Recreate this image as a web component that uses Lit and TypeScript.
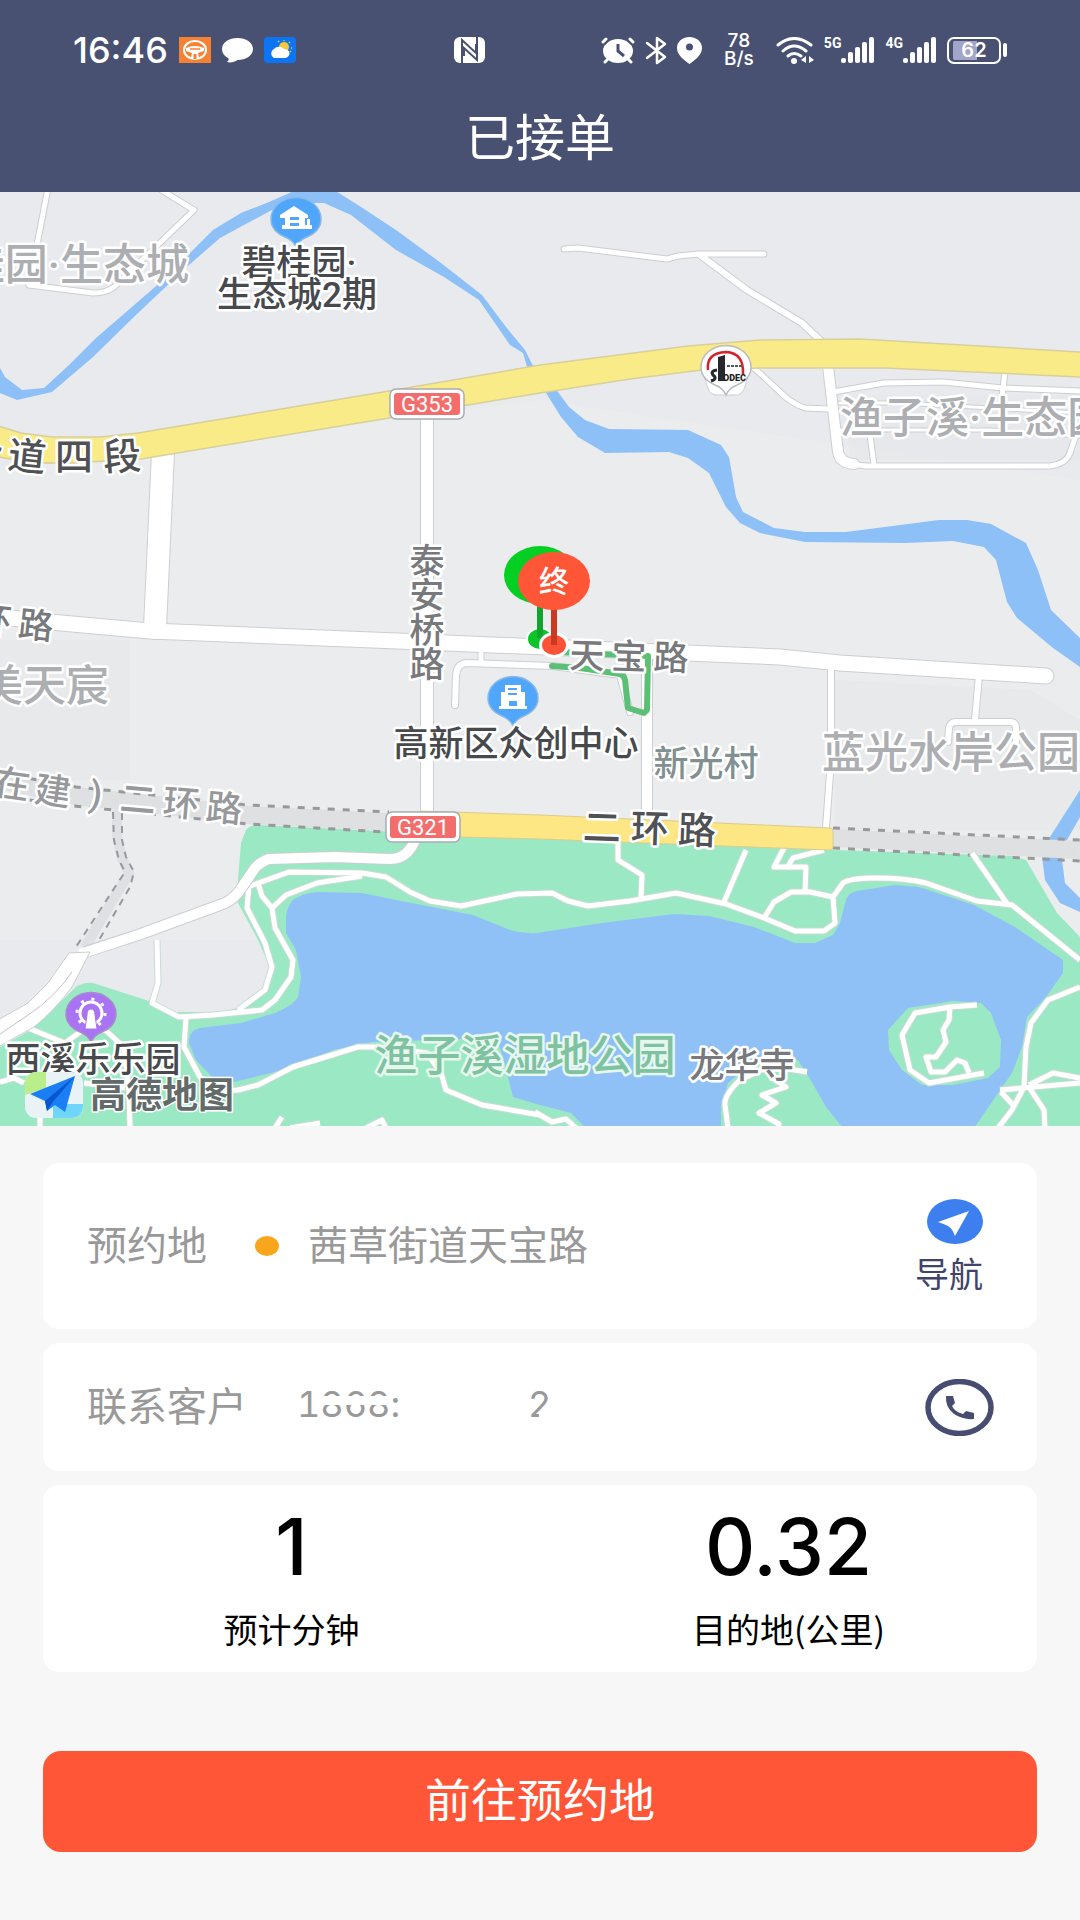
import { LitElement, html, svg, css } from "lit";
import { customElement } from "lit/decorators.js";

type Road = { d: string; w: number };
type Label = { t: string; x: number; y: number; c: string; a?: string };
type Glyph = { t: string; x: number; y: number; r: number; c: string };

const CITY_ROADS: Road[] = [
  { d: "M48 188L36 250L29 285L93 293Q106 293 114 287L194 210L158 188", w: 5 },
  { d: "M564 249L578 248L667 259L678 256L698 254H764", w: 5 },
  { d: "M700 255L747 290L802 323L822 342", w: 6 },
  { d: "M754 368L778 390Q790 403 805 408L828 409", w: 5 },
  { d: "M833 392L884 383L943 382L1003 388L1080 391", w: 5 },
  { d: "M1005 372L1001 405", w: 5 },
  { d: "M840 403H900L1080 413M840 430H990L1080 436", w: 3 },
  { d: "M870 435L874 465", w: 5 },
  { d: "M850 464L866 466H1050Q1066 464 1070 453L1077 432", w: 5 },
  { d: "M828 366L838 452Q840 463 854 464", w: 10 },
  { d: "M163 452L155 628", w: 22 },
  { d: "M427 415V818", w: 12 },
  { d: "M455 705L456 675Q457 663 468 663L553 666L620 675L630 712", w: 6 },
  { d: "M481 648V662", w: 5 },
  { d: "M647 650V820", w: 10 },
  { d: "M831 664V760L826 828", w: 6 },
  { d: "M979 675L975 720M948 742L949 728Q950 722 956 722H1010Q1016 722 1016 728V742", w: 6 },
  { d: "M0 617L50 622L150 631L447 643L780 657L840 663L1046 676", w: 15 },
];

const PARK_PATHS = [
  "M250 886L289 872L362 873L386 877L410 892L430 901L461 906L517 894L552 893L568 901L588 906L630 901L676 893L726 904L764 918L795 931H824L835 923L833 897L843 883Q850 878 877 878Q905 878 926 883L977 901L1012 905L1080 960",
  "M764 918L774 902L791 892H810L833 897M805 892L806 867H774L784 848M788 866L793 858L824 850",
  "M618 843V860L642 875L641 898M746 850L724 902M972 853L1008 905",
  "M362 876L317 883L286 895L272 908L262 896L258 883M272 908L275 928L293 960L291 977L275 1000L262 1010L213 1015L179 1017L152 1003L158 983L157 940",
  "M249 885L247 908L265 943L272 967L265 990L238 1010",
  "M186 1018L184 1047L200 1077Q215 1092 238 1090L258 1085L293 1067L358 1047H379L427 1053L441 1073L446 1090L482 1105L540 1115",
  "M28 1028L65 1043L83 1030H105L124 1047L129 1093L130 1128M0 1082L14 1078L24 1083M84 1083L125 1088M40 1115V1128",
  "M807 1072L770 1066L740 1080Q724 1095 725 1105L728 1128M771 1077L786 1087L762 1095L776 1103L759 1113L779 1124L778 1128",
  "M977 1005L950 1007L915 1013L902 1035L910 1070L929 1083L984 1073M950 1008L949 1020L943 1030L946 1042L936 1057H926L931 1072H945L957 1060L965 1063L969 1073",
  "M1080 987L1048 1000L1031 1023L1026 1047L1024 1087L1012 1110L998 1128M1000 1090L1080 1083M1029 1085L1053 1073L1080 1078M1001 1092L1015 1107M1029 1087L1044 1110L1045 1128",
  "M275 1128L282 1117M290 1128L320 1123M366 1128L382 1120L386 1128M535 1112L552 1122L566 1119L576 1128",
];

const LABELS: Label[] = [
  { t: "桂园·生态城", x: 189, y: 280, c: "area", a: "end" },
  { t: "碧桂园·", x: 299, y: 275, c: "poi", a: "middle" },
  { t: "生态城2期", x: 297, y: 307, c: "poi", a: "middle" },
  { t: "渔子溪·生态园", x: 840, y: 433, c: "area", a: "start" },
  { t: "美天宸", x: 109, y: 701, c: "area", a: "end" },
  { t: "蓝光水岸公园", x: 822, y: 768, c: "area", a: "start" },
  { t: "高新区众创中心", x: 516, y: 756, c: "poi", a: "middle" },
  { t: "新光村", x: 706, y: 776, c: "village", a: "middle" },
  { t: "渔子溪湿地公园", x: 525, y: 1071, c: "park", a: "middle" },
  { t: "龙华寺", x: 742, y: 1078, c: "street", a: "middle" },
  { t: "西溪乐乐园", x: 93, y: 1072, c: "poi", a: "middle" },
];

/* Road names follow the road, so every character has its own anchor and angle. */
const GLYPHS: Glyph[] = [
  { t: "大", x: -17, y: 452, r: 14, c: "major" },
  { t: "道", x: 27, y: 457, r: 6, c: "major" },
  { t: "四", x: 74, y: 457, r: 0, c: "major" },
  { t: "段", x: 122, y: 457, r: -4, c: "major" },
  { t: "环", x: -6, y: 620, r: 6, c: "street" },
  { t: "路", x: 36, y: 625, r: 6, c: "street" },
  { t: "泰", x: 427, y: 561, r: 0, c: "street" },
  { t: "安", x: 427, y: 595, r: 0, c: "street" },
  { t: "桥", x: 427, y: 630, r: 0, c: "street" },
  { t: "路", x: 427, y: 664, r: 0, c: "street" },
  { t: "天", x: 587, y: 655, r: 2, c: "street" },
  { t: "宝", x: 629, y: 656, r: 2, c: "street" },
  { t: "路", x: 671, y: 657, r: 2, c: "street" },
  { t: "在", x: 12, y: 784, r: 8, c: "planned" },
  { t: "建", x: 53, y: 791, r: 8, c: "planned" },
  { t: ")", x: 96, y: 794, r: 8, c: "planned" },
  { t: "二", x: 138, y: 799, r: 5, c: "planned" },
  { t: "环", x: 181, y: 803, r: 5, c: "planned" },
  { t: "路", x: 224, y: 808, r: 5, c: "planned" },
  { t: "二", x: 602, y: 828, r: 2, c: "major" },
  { t: "环", x: 650, y: 829, r: 2, c: "major" },
  { t: "路", x: 697, y: 831, r: 2, c: "major" },
];

const bubble = (x: number, y: number, fill: string, edge: string) => svg`
  <path d="M${x - 25} ${y}a25 21.500 0 1 1 50 0q0 12 -14 18q-8 3 -11 10q-3 -7 -11 -10q-14 -6 -14 -18z" fill=${fill} stroke=${edge} stroke-width="1.500"/>`;

const shield = (x: number, y: number, t: string) => svg`
  <rect x=${x} y=${y} width="74" height="30" rx="6" fill="#fff" stroke="#a9aab5" stroke-width="1.500"/>
  <rect x=${x + 4} y=${y + 4} width="66" height="22" rx="3" fill="#f36d6d"/>
  <text class="shield" x=${x + 37} y=${y + 23} text-anchor="middle">${t}</text>`;

@customElement("route-map")
export class RouteMap extends LitElement {
  static styles = css`
    :host { display: block; }
    .map { display: block; width: 100%; height: auto; background: #e9eaed; }
    text { font-family: Roboto, "Noto Sans CJK SC", sans-serif; font-weight: 500; paint-order: stroke; stroke: #fff; stroke-width: 5px; stroke-linejoin: round; }
    .area { font-size: 43px; fill: #acaeb2; }
    .park { font-size: 43px; fill: #7fc2a1; stroke: #e6f8ee; }
    .poi { font-size: 35px; fill: #47494d; }
    .village { font-size: 35px; fill: #819090; }
    .street { font-size: 35px; fill: #77797c; }
    .planned { font-size: 36px; fill: #96989b; }
    .major { font-size: 38px; fill: #4f5154; }
    .brand { font-size: 36px; fill: #626b69; stroke-width: 3px; font-weight: 700; }
    .shield { font-family: Roboto, sans-serif; font-size: 22px; font-weight: 400; fill: #fff; stroke: none; }
    .pin { font-size: 30px; fill: #fff; stroke: none; }
    .sign { font-family: Roboto, sans-serif; font-size: 9px; font-weight: 900; fill: #222; stroke: none; }
  `;

  render() {
    return html`
      <svg class="map" viewBox="0 192 1080 934" role="img" aria-label="高德地图">
        <path fill="#eceded" d="M0 470L540 400L1080 480V940H0z" opacity=".6"/>
        <path fill="#e4e6ea" d="M0 640H130V780H0zM835 680L1030 690L1080 720V830H835zM845 395H1080V460H850z" opacity=".5"/>

        <g fill="#8dc0f7">
          <path d="M0 368L5 377L22 390L44 388L69 365L96 338L155 287L188 255L213 230L241 213L269 202L296 190H334L358 205L396 230L441 263L482 295L506 327L525 350L534 368L528 370L523 353L510 345L479 300L444 277L396 250L351 215L324 203H296L272 210L220 238L189 265L138 313L93 357L52 392L17 400L0 393z"/>
          <path d="M555 388L569 407L585 420L609 429L688 430L721 445L729 457L736 497L743 512L774 528L805 532H846L939 520H967L991 524L1026 543L1038 570L1051 610L1080 638V667L1053 648L1017 618L1007 602L996 560L984 547L953 541L905 543L805 542L760 533L740 523L726 507L709 473L688 458L669 452L605 453L578 437L561 417L543 388z"/>
          <path d="M1080 790L1048 840L1042 857L1045 880L1060 903L1080 912V898L1065 883L1062 860L1067 840L1080 817z"/>
        </g>

        <path fill="#9be8c4" d="M241 843L246 830Q250 825 258 825L458 835L833 850L1013 856L1026 860L1057 913L1080 937V1128H0V1047L31 1030L76 987Q84 982 93 983L152 1002L176 1012H224Q246 1008 265 987Q272 977 270 967L258 940L238 903V880z"/>
        <path fill="#8fc1f7" d="M286 917Q287 906 293 900Q303 893 317 892L362 893L396 900L473 915L510 930Q523 934 537 933L602 923L674 914L709 916L754 927L795 943H815L833 935L840 923L846 900Q848 893 857 891L895 885L919 887L974 905L1015 927L1063 960V973L1046 997L1027 1017L1022 1047L1012 1073L974 1128H843L826 1107L809 1077L798 1060L780 1055L740 1073L728 1083L721 1107V1128H586L571 1113L540 1105L513 1097L503 1057L496 1038L372 1042L334 1050L275 1072L234 1082L213 1078L196 1060L189 1043Q189 1030 200 1028L241 1023L275 1013Q294 1005 298 997L301 977L296 950L286 933z"/>
        <path fill="#9be8c4" d="M888 1030L908 1008L953 1001L981 1003L991 1013L1001 1040L1000 1067L988 1078L953 1085H922L902 1070L889 1050z"/>

        <path fill="none" stroke="#dfe0e1" stroke-width="18" d="M0 780L75 796L248 815L388 822M833 838L1080 850"/>
        <path fill="none" stroke="#dfe0e3" stroke-width="10" d="M117 810V838L122 858L129 873L85 947"/>
        <g fill="none" stroke="#97999d" stroke-width="3" stroke-dasharray="7 8">
          <path d="M0 773L76 787L248 805L389 812M0 796L74 806L248 824L386 832"/>
          <path d="M833 828L1080 840M833 848L1080 861"/>
        </g>
        <g fill="none" stroke="#97999d" stroke-width="2" stroke-dasharray="7 6">
          <path d="M113 812L114 840L119 860L125 872L115 887L76 947M122 813V840L126 857L134 872L130 887L95 947"/>
        </g>

        <g fill="none" stroke-linejoin="round" stroke-linecap="round">
          ${CITY_ROADS.map((r) => svg`<path d=${r.d} stroke="#cdced3" stroke-width=${r.w + 2}/>`)}
          ${CITY_ROADS.map((r) => svg`<path d=${r.d} stroke="#fff" stroke-width=${r.w}/>`)}
        </g>

        <g fill="none" stroke-linejoin="round" stroke-linecap="butt">
          ${PARK_PATHS.map((d) => svg`<path d=${d} stroke="#c9dcd3" stroke-width="7"/>`)}
          ${PARK_PATHS.map((d) => svg`<path d=${d} stroke="#fff" stroke-width="5"/>`)}
          <path stroke="#cdced3" stroke-width="12" d="M416 838Q408 859 390 859L334 857L269 859Q260 862 255 868L238 893Q230 902 220 905L179 920L138 935L85 952"/>
          <path stroke="#fff" stroke-width="10" d="M416 838Q408 859 390 859L334 857L269 859Q260 862 255 868L238 893Q230 902 220 905L179 920L138 935L80 954"/>
        </g>
        <path fill="#fff" stroke="#cdced3" d="M69 953L90 952L72 987Q55 1010 34 1027L-2 1047V1020L28 1003L48 983z"/>
        <path fill="none" stroke="#c3c4ca" d="M72 972Q54 998 28 1015L0 1034"/>

        <path fill="#f9eb88" stroke="#d8cf9c" stroke-width="1.500" d="M-2 426L21 433L52 437H100L138 433L389 391L540 365L688 346L760 340L860 339L1082 352V377L884 368H760L702 370L630 379L540 393L389 418L141 459L69 463H34L-2 457z"/>
        <path fill="#fce784" stroke="#dccb8d" d="M420 811L540 815L830 828Q833 828 833 831V847Q833 850 830 850L540 839L420 836z"/>

        <g fill="none" stroke="#5bbf75" stroke-width="6" stroke-linejoin="round" stroke-linecap="round">
          <path d="M552 666L580 668L620 674Q624 675 625 680L628 708L644 713L647 710L648 656L600 654L560 652"/>
        </g>

        ${shield(390, 389, "G353")}
        ${shield(386, 812, "G321")}

        ${bubble(296, 219, "#4fa6fa", "#8ab9e6")}
        <path fill="#fff" d="M280 215L294 206L308 215V218H305V225H307V219H310V225H312V229H282V225H285V218H280z"/>
        <path fill="#4fa6fa" d="M290 217H299V220H290zM290 223H299V226H290z"/>
        ${bubble(513, 698, "#4fa6fa", "#8ab9e6")}
        <path fill="#fff" d="M505 685H521V692H525V706H527V709H499V706H501V692H505z"/>
        <path fill="#4fa6fa" d="M508 688H517V690H508zM508 693H517V695H508zM509 701H517V706H509z"/>
        ${bubble(91, 1014, "#a974f3", "#a98cc9")}
        <circle cx="91" cy="1013" r="11" fill="none" stroke="#fff" stroke-width="3"/>
        <circle cx="91" cy="1013" r="14" fill="none" stroke="#fff" stroke-width="3" stroke-dasharray="3 8"/>
        <path fill="#fff" stroke="#a974f3" d="M91 1009Q95 1009 95 1015L97 1029H85L87 1015Q87 1009 91 1009z"/>
        <path fill="#fff" d="M705 378Q708 395 716 395H738Q745 393 747 378z" stroke="#cfcfd4"/>
        ${bubble(726, 367, "#fff", "#b9bac2")}
        <path fill="none" stroke="#d3222c" stroke-width="2.500" d="M708 370Q706 353 726 352Q744 353 743 374"/>
        <path fill="#26282b" d="M718 357L725 355V381H718z"/>
        <path fill="none" stroke="#26282b" stroke-width="3" d="M717 370Q710 371 713 375Q718 379 711 381"/>
        <path stroke="#55575b" stroke-width="2" stroke-dasharray="3 1" d="M727 366H742"/>
        <text class="sign" x="723" y="381">ODEC</text>

        ${LABELS.map((l) => svg`<text class=${l.c} x=${l.x} y=${l.y} text-anchor=${l.a ?? "start"}>${l.t}</text>`)}
        ${GLYPHS.map((g) => svg`<text class=${g.c} transform=${`translate(${g.x} ${g.y}) rotate(${g.r})`} y="13" text-anchor="middle">${g.t}</text>`)}

        <g>
          <ellipse cx="540" cy="639" rx="14" ry="12" fill="#fff"/>
          <ellipse cx="540" cy="639" rx="12" ry="10" fill="#0cc52a"/>
          <rect x="537" y="600" width="6" height="38" fill="#12a52e"/>
          <ellipse cx="540" cy="575" rx="36" ry="29" fill="#06cf23"/>
          <ellipse cx="554" cy="645" rx="15" ry="13" fill="#fff"/>
          <ellipse cx="554" cy="645" rx="12" ry="10" fill="#fb5238"/>
          <rect x="551" y="606" width="6" height="39" fill="#c93a22"/>
          <ellipse cx="554" cy="581" rx="36" ry="29" fill="#ff5638"/>
          <text class="pin" x="554" y="592" text-anchor="middle">终</text>
        </g>

        <rect x="25" y="1072" width="58" height="46" rx="11" fill="#e9f3f5"/>
        <path fill="#b9ee8a" d="M36 1072H46V1088L25 1095V1083Q26 1073 36 1072z"/>
        <path fill="#6fd5fb" d="M53 1104H83V1107Q82 1117 72 1118H53z"/>
        <path fill="#1a7ff5" d="M30 1094L75 1076L65 1112L55 1105L47 1111L45 1101z"/>
        <path fill="#0a55d0" d="M75 1076L45 1101L47 1111L52 1103z"/>
        <text class="brand" x="90" y="1108">高德地图</text>
      </svg>`;
  }
}

@customElement("status-bar")
export class StatusBar extends LitElement {
  static styles = css`
    :host { display: flex; align-items: center; height: 100px; padding: 0 73px; box-sizing: border-box; color: #fff; font-family: Inter, sans-serif; }
    svg { display: block; flex: none; }
    .left, .right { display: flex; align-items: center; gap: 11px; }
    .nfc { margin-left: 158px; }
    .right { margin-left: auto; gap: 10px; }
    .time { font-size: 36px; line-height: 40px; font-weight: 500; }
    .speed { display: flex; flex-direction: column; align-items: center; width: 36px; margin: 0 9px; font-size: 19px; line-height: 18px; font-weight: 500; }
    .cell { display: flex; align-items: flex-start; }
    .gen { font-family: Roboto, sans-serif; font-size: 14px; line-height: 12px; font-weight: 700; }
    .battery { display: flex; align-items: center; gap: 2px; }
    .shell { display: flex; align-items: center; justify-content: center; box-sizing: border-box; width: 54px; height: 27px; border: 2px solid #fff; border-radius: 7px; font-size: 20px; line-height: 22px; font-weight: 600; background: linear-gradient(90deg, #a2a4c8 58%, transparent 58%) content-box; padding: 2px 4px; }
    .cap { width: 4px; height: 14px; border-radius: 2px; background: #fff; }
  `;

  private bars() {
    return html`<svg width="34" height="26" viewBox="0 0 34 26" fill="#fff" aria-hidden="true">
      <rect x="0" y="21" width="5" height="5" rx="2"/><rect x="7" y="15" width="5" height="11" rx="2"/>
      <rect x="14" y="10" width="5" height="16" rx="2"/><rect x="21" y="5" width="5" height="21" rx="2"/>
      <rect x="28" y="0" width="5" height="26" rx="2"/></svg>`;
  }

  render() {
    return html`
      <div class="left">
        <span class="time">16:46</span>
        <svg width="32" height="26" viewBox="0 0 32 26" aria-hidden="true">
          <rect width="32" height="26" fill="#f58233"/>
          <ellipse cx="16" cy="13" rx="11" ry="9" fill="none" stroke="#fff" stroke-width="2"/>
          <path d="M7 11Q16 7 25 11V14L19 16L20 21H12L13 16L7 14z" fill="#fff"/>
          <path d="M11 12H21" stroke="#f58233" stroke-width="1.500"/><path d="M16 17V22" stroke="#f58233" stroke-width="3"/>
        </svg>
        <svg width="31" height="26" viewBox="0 0 31 26" fill="#fff" aria-hidden="true">
          <path d="M15.500 1C24 1 31 5.500 31 12S24 23 15.500 23C13 25 8 26 5 25C7 23 7 22 6 21C2 19 0 16 0 12C0 5.500 7 1 15.500 1z"/>
        </svg>
        <svg width="32" height="26" viewBox="0 0 32 26" aria-hidden="true">
          <rect width="32" height="26" rx="4" fill="#0d74f4"/>
          <circle cx="20" cy="10" r="5" fill="#f9c835"/>
          <path d="M20 4V3M25 6L26 5M27 11H28M15 5L14 4M26 14L27 15" stroke="#f9c835" stroke-width="1.500"/>
          <path d="M10 21a5 5 0 0 1 0-9a6 5 0 0 1 10 0a5 4.500 0 0 1 1 9z" fill="#fff"/>
        </svg>
      </div>
      <svg class="nfc" width="31" height="26" viewBox="0 0 31 26" aria-hidden="true">
        <rect width="31" height="26" rx="6" fill="#fff"/>
        <path d="M8 26V3L22 16V7M23 0V23L10 11V19" fill="none" stroke="#495173" stroke-width="2"/>
      </svg>
      <div class="right">
        <svg width="34" height="27" viewBox="0 0 34 27" aria-hidden="true">
          <ellipse cx="17" cy="14" rx="15" ry="12" fill="#fff"/>
          <path d="M2 6L6 2M32 6L28 2M6 22L4 25M28 22L30 25" stroke="#495173" stroke-width="6"/>
          <path d="M2 5L5 2M32 5L29 2M7 22L4 25M27 22L30 25" stroke="#fff" stroke-width="3" stroke-linecap="round"/>
          <path d="M17 7V14L23 19" fill="none" stroke="#495173" stroke-width="3"/>
        </svg>
        <svg width="22" height="29" viewBox="0 0 22 29" fill="none" stroke="#fff" stroke-width="2.500" stroke-linejoin="round" stroke-linecap="round" aria-hidden="true">
          <path d="M2 7L20 21L12 27V2L20 8L2 22"/>
        </svg>
        <svg width="25" height="27" viewBox="0 0 25 27" aria-hidden="true">
          <path fill="#fff" d="M12.500 0C20 0 25 5 25 11C25 18 18 23 12.500 27C7 23 0 18 0 11C0 5 5 0 12.500 0z"/>
          <circle cx="12.500" cy="10" r="3.500" fill="#495173"/>
        </svg>
        <div class="speed"><span>78</span><span>B/s</span></div>
        <svg width="38" height="27" viewBox="0 0 38 27" fill="none" stroke="#fff" stroke-width="3" stroke-linecap="round" aria-hidden="true">
          <path d="M2 8Q18 -5 35 8M7 14Q18 4 30 14M12 19Q18 14 25 19"/>
          <circle cx="18" cy="24" r="3" fill="#fff" stroke="none"/>
          <path d="M30 19V26L25 23M33 26V19L38 23" fill="#fff" stroke="none"/>
        </svg>
        <div class="cell"><span class="gen">5G</span>${this.bars()}</div>
        <div class="cell"><span class="gen">4G</span>${this.bars()}</div>
        <div class="battery"><span class="shell">62</span><span class="cap"></span></div>
      </div>`;
  }
}

@customElement("app-root")
export class AppRoot extends LitElement {
  static styles = css`
    :host { display: flex; flex-direction: column; min-height: 100vh; background: #f7f7f7; font-family: "Noto Sans CJK SC", sans-serif; }
    .head { background: #495173; padding-bottom: 24px; }
    .title { margin: 0; color: #fff; font-size: 50px; line-height: 68px; font-weight: 400; text-align: center; }
    .body { display: flex; flex-direction: column; gap: 14px; padding: 37px 43px 68px; }
    .card { display: flex; align-items: center; background: #fff; border-radius: 16px; box-sizing: border-box; color: #999; font-size: 40px; line-height: 48px; padding: 0 43px 0 44px; }
    .place { min-height: 166px; padding-right: 54px; }
    .contact { min-height: 128px; gap: 50px; }
    .field { padding-bottom: 6px; }
    .dot { width: 24px; height: 20px; border-radius: 50%; background: #faa61c; margin: 0 29px 0 48px; }
    .go { display: flex; flex-direction: column; align-items: flex-end; gap: 8px; margin-left: auto; padding: 0; border: 0; background: none; color: #3f4468; font: 34px/42px "Noto Sans CJK SC", sans-serif; cursor: pointer; }
    .call { display: block; margin-left: auto; }
    .go svg, .call svg { display: block; }
    .number { position: relative; display: flex; font-family: Inter, sans-serif; font-size: 36px; font-variant-numeric: tabular-nums; }
    .tail { margin-left: 128px; }
    .veil { position: absolute; background: #fff; left: 24px; top: 16px; width: 70px; height: 9px; }
    .nick { position: absolute; background: #fff; right: 0; top: 31px; width: 12px; height: 8px; }
    .stats { display: grid; grid-template-columns: 1fr 1fr; padding: 20px 0 19px; color: #000; text-align: center; }
    .stat { display: flex; flex-direction: column; gap: 16px; }
    .value { font-family: Inter, sans-serif; font-size: 78px; line-height: 84px; font-weight: 500; }
    .name { font-size: 34px; line-height: 48px; }
    .primary { height: 101px; margin-top: 65px; padding: 0 0 10px; border: 0; border-radius: 18px; background: #ff5638; color: #fff; font: 400 46px/60px "Noto Sans CJK SC", sans-serif; cursor: pointer; }
  `;

  render() {
    return html`
      <header class="head">
        <status-bar></status-bar>
        <h1 class="title">已接单</h1>
      </header>
      <route-map></route-map>
      <main class="body">
        <section class="card place">
          <span class="field">预约地</span><span class="dot"></span><span class="field">茜草街道天宝路</span>
          <button class="go" type="button">
            <svg width="56" height="45" viewBox="0 0 56 45" aria-hidden="true">
              <ellipse cx="28" cy="22.500" rx="28" ry="22.500" fill="#3d7fee"/>
              <path fill="#fff" d="M42 12L28 37Q25 29 21 27Q17 25 11 23z"/>
            </svg>
            <span>导航</span>
          </button>
        </section>
        <section class="card contact">
          <span class="field">联系客户</span>
          <span class="field number"><span>1868</span><span>:</span><span class="tail">2</span><span class="veil"></span><span class="nick"></span></span>
          <a class="call" href="tel:1868" aria-label="联系客户">
            <svg width="69" height="57" viewBox="0 0 69 57" aria-hidden="true">
              <ellipse cx="34.500" cy="28.500" rx="31.500" ry="26" fill="none" stroke="#474d70" stroke-width="5.500"/>
              <path fill="#474d70" d="M21 17H28L30 24L27 27Q30 33 38 35L41 32L49 34V40Q38 41 29 35Q20 28 21 17z"/>
            </svg>
          </a>
        </section>
        <section class="card stats">
          <div class="stat"><span class="value">1</span><span class="name">预计分钟</span></div>
          <div class="stat"><span class="value">0.32</span><span class="name">目的地(公里)</span></div>
        </section>
        <button class="primary" type="button">前往预约地</button>
      </main>`;
  }
}
